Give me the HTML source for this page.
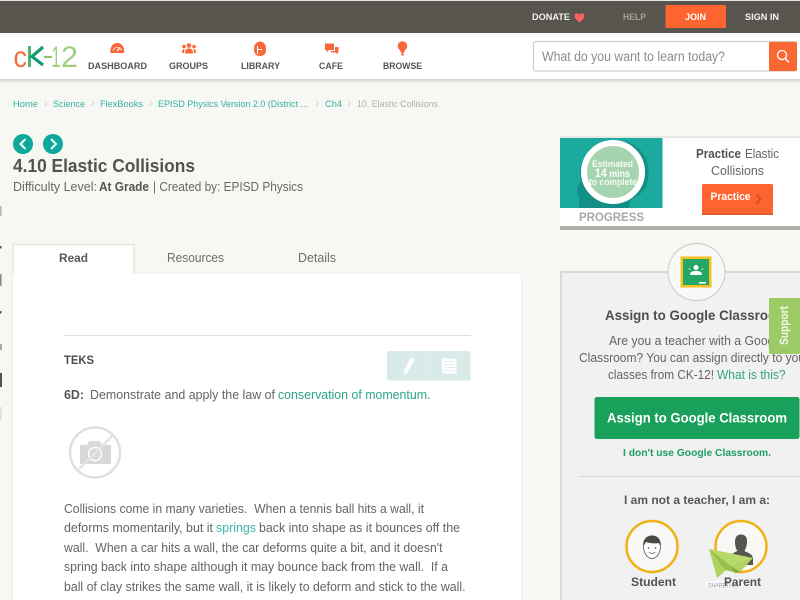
<!DOCTYPE html>
<html lang="en">
<head>
<meta charset="utf-8">
<title>4.10 Elastic Collisions</title>
<style>
html,body{margin:0;padding:0;width:800px;height:600px;overflow:hidden;background:#f7f7f3}
svg{position:absolute;left:0;top:0;display:block}
text{font-family:"Liberation Sans",sans-serif;fill:#64625d}
.b{font-weight:700}
.nav{font-weight:700;font-size:9.5px;fill:#57554f}
.crumb{font-size:9.5px;fill:#36b0a3}
.sep{fill:none;stroke:#d6d6d0;stroke-width:1}
.p{font-size:12.5px;fill:#666460}
.g{fill:#2aa585}
.side{font-size:12.5px;fill:#666460}
</style>
</head>
<body>
<svg width="800" height="600" viewBox="0 0 800 600" xmlns="http://www.w3.org/2000/svg">
<defs>
<linearGradient id="sh" x1="0" y1="0" x2="0" y2="1"><stop offset="0" stop-color="#000" stop-opacity=".16"/><stop offset="1" stop-color="#000" stop-opacity="0"/></linearGradient>
</defs>
<rect width="800" height="600" fill="#f7f7f3"/>

<!-- top bar -->
<rect width="800" height="1" fill="#e6e6e2"/>
<rect y="1" width="800" height="32" fill="#58554e"/>
<text x="532" y="20" class="b" font-size="9.5" style="fill:#f1f0ec" textLength="38" lengthAdjust="spacingAndGlyphs">DONATE</text>
<path d="M579.500 22.500 C576 19.500 574.500 17.800 574.500 15.800 C574.500 13.200 578 12.300 579.500 14.700 C581 12.300 584.500 13.200 584.500 15.800 C584.500 17.800 583 19.500 579.500 22.500Z" fill="#f3625f"/>
<text x="623" y="20" class="b" font-size="9.500" style="fill:#a3a099" textLength="23" lengthAdjust="spacingAndGlyphs">HELP</text>
<rect x="665.500" y="5" width="60.500" height="23" rx="1" fill="#fd6430"/>
<text x="685" y="20" class="b" font-size="9.500" style="fill:#fff" textLength="21" lengthAdjust="spacingAndGlyphs">JOIN</text>
<text x="745" y="20" class="b" font-size="9.500" style="fill:#f4f3ef" textLength="34" lengthAdjust="spacingAndGlyphs">SIGN IN</text>

<!-- header -->
<rect y="33" width="800" height="46" fill="#fff"/>
<rect y="79" width="800" height="4" fill="url(#sh)"/>
<!-- logo -->
<text x="13.500" y="67" font-size="30" style="fill:#f0703a" textLength="13.500" lengthAdjust="spacingAndGlyphs">c</text>
<path d="M29.500 46V67" stroke="#4cb576" stroke-width="3" fill="none"/>
<path d="M43 47L32 56.500L43 65" stroke="#129a72" stroke-width="3.200" fill="none"/>
<rect x="44" y="56" width="8" height="2" fill="#8fc06a"/>
<text x="51.500" y="67" font-size="30" style="fill:#a2cf7e" textLength="9" lengthAdjust="spacingAndGlyphs">1</text>
<text x="61" y="67" font-size="30" style="fill:#a2cf7e" textLength="17" lengthAdjust="spacingAndGlyphs">2</text>

<!-- nav icons -->
<path d="M110.500 53 C109.500 47 113 43 117.300 43 C121.500 43 125 47 124 53Z" fill="#f9683a"/>
<path d="M117.300 51L120 47.500" stroke="#fff" stroke-width="1.300"/>
<path d="M112.800 50.500A5 5 0 0 1 122 50.500" stroke="#fff" stroke-width=".7" fill="none"/>
<g fill="#f9683a">
<circle cx="189" cy="45.500" r="2.300"/><path d="M185 53.500C185 49.500 186.500 48.500 189 48.500C191.500 48.500 193 49.500 193 53.500Z"/>
<circle cx="184" cy="46.500" r="1.800"/><path d="M182 53C182 50 182.500 49 184.500 49L184 53Z"/>
<circle cx="194" cy="46.500" r="1.800"/><path d="M196 53C196 50 195.500 49 193.500 49L194 53Z"/>
</g>
<path d="M254 49C254 44 257 41.500 260 41.500C263.500 41.500 266.500 44.500 266 50C265.800 54 264 56 260 56C256 56 254 54 254 49Z" fill="#f9683a"/>
<path d="M257.500 46V54M257.500 49.500H262" stroke="#fff" stroke-width="1" fill="none"/>
<path d="M325 43.500H334V50H329L326.500 52.500V50H325Z" fill="#f9683a"/>
<path d="M335 47H338.500V52.500H337.500V54.500L335.500 52.500H331V51H335Z" fill="#f9683a"/>
<circle cx="402.500" cy="46" r="4.800" fill="#f9683a"/>
<path d="M399.800 49.500H405.200L403.800 53H401.200Z" fill="#f9683a"/>
<rect x="401.200" y="53.500" width="2.600" height="2" fill="#f9683a"/>

<text x="88" y="69" class="nav" textLength="59" lengthAdjust="spacingAndGlyphs">DASHBOARD</text>
<text x="169" y="69" class="nav" textLength="39" lengthAdjust="spacingAndGlyphs">GROUPS</text>
<text x="241" y="69" class="nav" textLength="39" lengthAdjust="spacingAndGlyphs">LIBRARY</text>
<text x="319" y="69" class="nav" textLength="24" lengthAdjust="spacingAndGlyphs">CAFE</text>
<text x="383" y="69" class="nav" textLength="39" lengthAdjust="spacingAndGlyphs">BROWSE</text>

<!-- search -->
<rect x="533.500" y="41.500" width="263" height="29.500" rx="2.500" fill="#fff" stroke="#cdccc2" stroke-width="1.200"/>
<rect x="769" y="42" width="28" height="29" rx="1.500" fill="#fa6733"/>
<text x="542" y="61" font-size="13.500" style="fill:#8d8c88" textLength="183" lengthAdjust="spacingAndGlyphs">What do you want to learn today?</text>
<circle cx="782" cy="55" r="4.500" fill="none" stroke="#fff" stroke-width="1.300"/>
<path d="M785.300 58.500L789 62.500" stroke="#fff" stroke-width="1.500"/>

<!-- breadcrumb -->
<text x="13" y="107" class="crumb" textLength="25" lengthAdjust="spacingAndGlyphs">Home</text>
<text x="53" y="107" class="crumb" textLength="32" lengthAdjust="spacingAndGlyphs">Science</text>
<text x="100" y="107" class="crumb" textLength="43" lengthAdjust="spacingAndGlyphs">FlexBooks</text>
<text x="158" y="107" class="crumb" textLength="150" lengthAdjust="spacingAndGlyphs">EPISD Physics Version 2.0 (District ...</text>
<text x="325" y="107" class="crumb" textLength="17" lengthAdjust="spacingAndGlyphs">Ch4</text>
<text x="357" y="107" class="crumb" style="fill:#b0afaa" textLength="81" lengthAdjust="spacingAndGlyphs">10. Elastic Collisions</text>
<path class="sep" d="M44.500 101L47 103.500L44.500 106M91.500 101L94 103.500L91.500 106M149.500 101L152 103.500L149.500 106M316 101L318.500 103.500L316 106M348 101L350.500 103.500L348 106"/>

<!-- title area -->
<circle cx="23" cy="144" r="10" fill="#0ca89b"/>
<circle cx="53" cy="144" r="10" fill="#0ca89b"/>
<path d="M25.500 139L20.500 144L25.500 149M51 139L56 144L51 149" fill="none" stroke="#fff" stroke-width="2"/>
<text x="13" y="172" class="b" font-size="18" style="fill:#55534e" textLength="182" lengthAdjust="spacingAndGlyphs">4.10 Elastic Collisions</text>
<text x="13" y="191" font-size="12.500" style="fill:#6a6864" textLength="84" lengthAdjust="spacingAndGlyphs">Difficulty Level:</text>
<text x="99" y="191" class="b" font-size="12.500" style="fill:#55534e" textLength="50" lengthAdjust="spacingAndGlyphs">At Grade</text>
<text x="153" y="191" font-size="12.500" style="fill:#6a6864" textLength="150" lengthAdjust="spacingAndGlyphs">| Created by: EPISD Physics</text>

<!-- left stray marks -->
<g fill="#55534e">
<rect y="206" width="1.500" height="10" fill="#b5b4ae"/>
<rect y="246" width="1.500" height="2.500"/>
<rect y="274" width="1.500" height="12" fill="#8a8985"/>
<rect y="311" width="1.500" height="2.500"/>
<rect y="344" width="2" height="6" fill="#aaa9a4"/>
<rect y="373" width="2" height="14"/>
<rect y="407" width="1.500" height="13" fill="#dcdcd6"/>
</g>

<!-- article card -->
<rect x="12.500" y="273" width="509" height="327" fill="#fff"/>
<path d="M12.500 273V600M521.500 273V600" stroke="#f0f0ec" stroke-width="1"/>
<rect x="134" y="272.500" width="388" height="1" fill="#f0f0ec"/>
<rect x="13" y="244.500" width="121" height="30" fill="#fff"/>
<path d="M13 274V244.500H134V273" fill="none" stroke="#e2e2dc" stroke-width="1.200"/>
<text x="59" y="262" class="b" font-size="12" style="fill:#5a5853" textLength="29" lengthAdjust="spacingAndGlyphs">Read</text>
<text x="167" y="262" font-size="12.500" style="fill:#6f6d69" textLength="57" lengthAdjust="spacingAndGlyphs">Resources</text>
<text x="298" y="262" font-size="12.500" style="fill:#6f6d69" textLength="38" lengthAdjust="spacingAndGlyphs">Details</text>

<rect x="64" y="335" width="407" height="1" fill="#dfdfdc"/>
<text x="64" y="364" class="b" font-size="12" style="fill:#4f4d49" textLength="30" lengthAdjust="spacingAndGlyphs">TEKS</text>
<rect x="387" y="351" width="83.500" height="29.500" rx="2" fill="#d8ebe9"/>
<rect x="429" y="351" width="1" height="29.500" fill="#e2f0ee"/>
<path d="M411 357.500L415 359.500L407.500 372.500L404 373.500L404.500 370Z" fill="#fff"/>
<path d="M402 374.500H406" stroke="#fff" stroke-width=".7"/>
<rect x="442" y="358.500" width="14.500" height="15" fill="#fff"/>
<path d="M443.500 361.500H455M443.500 364.500H455M443.500 367.500H455M443.500 370.500H455" stroke="#d8ebe9" stroke-width=".7"/>

<text x="64" y="399" class="b p" style="fill:#55534e" textLength="20" lengthAdjust="spacingAndGlyphs">6D:</text>
<text x="90" y="399" class="p" textLength="185" lengthAdjust="spacingAndGlyphs">Demonstrate and apply the law of</text>
<text x="278" y="399" class="p g" textLength="149" lengthAdjust="spacingAndGlyphs">conservation of momentum</text>
<text x="427" y="399" class="p">.</text>

<circle cx="95" cy="452.500" r="25" fill="#fff" stroke="#e0e0e0" stroke-width="2.500"/>
<path d="M80 445H87L89 441H100L102 445H111V464H80Z" fill="#d8d8d8"/>
<circle cx="95" cy="454" r="6.500" fill="#d8d8d8" stroke="#fff" stroke-width="1.500"/>
<path d="M79 469L112 436" stroke="#e4e4e4" stroke-width="2.500"/>

<text x="64" y="513" class="p" textLength="360" lengthAdjust="spacingAndGlyphs" xml:space="preserve">Collisions come in many varieties.  When a tennis ball hits a wall, it</text>
<text x="64" y="532" class="p" textLength="149" lengthAdjust="spacingAndGlyphs">deforms momentarily, but it</text>
<text x="216" y="532" class="p" style="fill:#3fb5a5" textLength="40" lengthAdjust="spacingAndGlyphs">springs</text>
<text x="259" y="532" class="p" textLength="201" lengthAdjust="spacingAndGlyphs">back into shape as it bounces off the</text>
<text x="64" y="552" class="p" textLength="378.500" lengthAdjust="spacingAndGlyphs" xml:space="preserve">wall.  When a car hits a wall, the car deforms quite a bit, and it doesn't</text>
<text x="64" y="571" class="p" textLength="384" lengthAdjust="spacingAndGlyphs" xml:space="preserve">spring back into shape although it may bounce back from the wall.  If a</text>
<text x="64" y="591" class="p" textLength="401.500" lengthAdjust="spacingAndGlyphs">ball of clay strikes the same wall, it is likely to deform and stick to the wall.</text>

<!-- practice box -->
<rect x="560" y="137" width="240" height="90" fill="#fff"/>
<rect x="560" y="136.500" width="240" height="1.200" fill="#dddcd6"/>
<rect x="560" y="226" width="240" height="4" fill="#b0aea7"/>
<rect x="560" y="138" width="102.500" height="70" fill="#1caa9e"/>
<path d="M579 208V196C575 190 578 184 581 182C577 165 585 143 613 140C640 140 652 160 648 180C646 192 636 197 630 200L629 208Z" fill="#128f87"/>
<circle cx="613" cy="172" r="29" fill="#a6d4b0" stroke="#fff" stroke-width="6"/>
<text x="592" y="167" class="b" font-size="9" style="fill:#f4fbf5" textLength="41" lengthAdjust="spacingAndGlyphs">Estimated</text>
<text x="595" y="177" class="b" font-size="10" style="fill:#fff" textLength="35" lengthAdjust="spacingAndGlyphs"><tspan font-size="12">14</tspan> mins</text>
<text x="589" y="185" class="b" font-size="9" style="fill:#f4fbf5" textLength="48" lengthAdjust="spacingAndGlyphs">to complete</text>
<text x="579" y="221" class="b" font-size="11.500" style="fill:#a9a8a3" textLength="65" lengthAdjust="spacingAndGlyphs">PROGRESS</text>
<text x="696" y="158" class="b side" style="fill:#55534e" textLength="45" lengthAdjust="spacingAndGlyphs">Practice</text>
<text x="745" y="158" class="side" textLength="34" lengthAdjust="spacingAndGlyphs">Elastic</text>
<text x="711" y="175" class="side" textLength="53" lengthAdjust="spacingAndGlyphs">Collisions</text>
<rect x="702" y="184" width="71" height="31" rx="1.500" fill="#fd6430"/>
<rect x="702" y="213.500" width="71" height="1.500" fill="#d9562c"/>
<text x="710.500" y="200" class="b" font-size="11" style="fill:#fff" textLength="40" lengthAdjust="spacingAndGlyphs">Practice</text>
<path d="M756.500 194.500L760.500 199L756.500 203.500" fill="none" stroke="#d9542a" stroke-width="2.500"/>

<!-- classroom panel -->
<rect x="561" y="272" width="239" height="328" fill="#f1f1f1"/>
<path d="M561 600V272H800" fill="none" stroke="#d9d9d7" stroke-width="2"/>
<circle cx="696.500" cy="272" r="28.500" fill="#f8f8f6" stroke="#cfcfcc" stroke-width="1.200"/>
<rect x="680.500" y="256.500" width="31" height="31" fill="#f8bf1d"/>
<rect x="683" y="259" width="26" height="26" fill="#24a666"/>
<circle cx="696" cy="267.500" r="2.500" fill="#fff"/>
<path d="M690 275C690 271.500 692.500 271 696 271C699.500 271 702 271.500 702 275Z" fill="#fff"/>
<circle cx="689.500" cy="269" r="1.200" fill="#7cc79f"/><circle cx="702.500" cy="269" r="1.200" fill="#7cc79f"/>
<rect x="699" y="282" width="7" height="1.600" fill="#fff"/>

<text x="605" y="320" class="b" font-size="13.500" style="fill:#4f4d49" textLength="183" lengthAdjust="spacingAndGlyphs">Assign to Google Classroom</text>
<text x="609" y="345" class="side" textLength="175" lengthAdjust="spacingAndGlyphs">Are you a teacher with a Google</text>
<text x="579" y="362" class="side" textLength="226" lengthAdjust="spacingAndGlyphs">Classroom? You can assign directly to you</text>
<text x="608" y="379" class="side" textLength="106" lengthAdjust="spacingAndGlyphs">classes from CK-12!</text>
<text x="717" y="379" class="side" style="fill:#34a57f" textLength="68.500" lengthAdjust="spacingAndGlyphs">What is this?</text>
<rect x="594.500" y="397" width="205" height="42" rx="2.500" fill="#19a05b"/>
<text x="607" y="422.500" class="b" font-size="13.500" style="fill:#fff" textLength="180" lengthAdjust="spacingAndGlyphs">Assign to Google Classroom</text>
<text x="623" y="456" class="b" font-size="10.500" style="fill:#1f9d68" textLength="148" lengthAdjust="spacingAndGlyphs">I don't use Google Classroom.</text>
<rect x="578" y="476" width="222" height="1" fill="#dbdbd9"/>
<text x="624" y="504" class="b" font-size="12" style="fill:#5a5853" textLength="146" lengthAdjust="spacingAndGlyphs">I am not a teacher, I am a:</text>

<circle cx="652" cy="546.500" r="25.500" fill="#f8f8f6" stroke="#efb116" stroke-width="2.500"/>
<circle cx="741" cy="546.500" r="25.500" fill="#f8f8f6" stroke="#efb116" stroke-width="2.500"/>
<path d="M643.500 546C643.500 539 648 537 652 537C656 537 660.500 539 660.500 546C660.500 554 656 558.500 652 558.500C648 558.500 643.500 554 643.500 546Z" fill="#fff" stroke="#555" stroke-width=".8"/>
<path d="M643.500 546C642.500 539 647 535.500 652 535.500C657 535.500 661.500 539 660.500 546L658.500 543C654 544 649 543 646 542Z" fill="#4b4945"/>
<path d="M649 552C651 554 653.500 554 655 552" stroke="#555" stroke-width=".8" fill="none"/>
<circle cx="648.500" cy="548" r=".8" fill="#444"/><circle cx="655.500" cy="548" r=".8" fill="#444"/>
<path d="M735 542C735 536 738 534.500 741 534.500C744.500 534.500 747.500 537 747 542C746.800 546 745.500 549 744.500 551C748 553 752 553.500 753 558V565H727C727 556 733 553 737.500 551C736 549 735 546 735 542Z" fill="#575550"/>

<text x="631" y="586" class="b" font-size="12" style="fill:#55534e" textLength="45" lengthAdjust="spacingAndGlyphs">Student</text>

<!-- share widget -->
<ellipse cx="724" cy="584.500" rx="20" ry="4.500" fill="#f9f9f9"/>
<text x="708" y="587.500" font-size="6" style="fill:#9a9a9a" textLength="30" lengthAdjust="spacingAndGlyphs">SHARETHIS</text>
<text x="724" y="586" class="b" font-size="12" style="fill:#55534e" textLength="37" lengthAdjust="spacingAndGlyphs">Parent</text>
<path d="M709 549L753 558L740 572L731 566L725 571L717 578Z" fill="#aed35f"/>
<path d="M709 549L731 566L735 572L725 570Z" fill="#97bf4c"/>
<path d="M709 549L753 558L731 566Z" fill="#b5d96a"/>
<path d="M731 566L740 572L735 573Z" fill="#7fa83e"/>

<!-- support tab -->
<rect x="769" y="298" width="31" height="56" rx="1" fill="#9ccb66"/>
<text transform="translate(788,345) rotate(-90)" class="b" font-size="11.500" style="fill:#f5faef" textLength="39" lengthAdjust="spacingAndGlyphs">Support</text>
</svg>
</body>
</html>
